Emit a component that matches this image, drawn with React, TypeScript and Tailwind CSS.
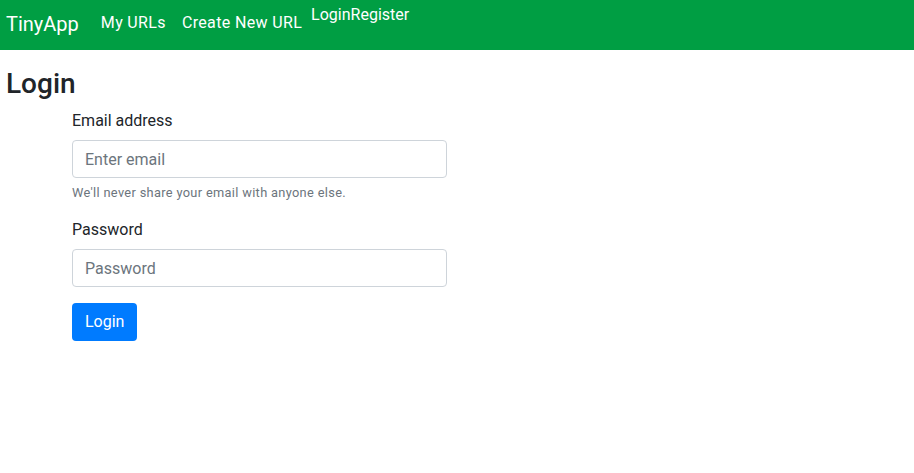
import React from "react";

export default function App() {
  return (
    <div className="min-h-[473px] bg-white text-[#212529]" style={{ fontFamily: "Roboto, 'Liberation Sans', sans-serif" }}>
      <nav className="flex h-[50px] items-start bg-[#009e43] px-[6px]">
        <a className="mt-[9px] text-[20px] leading-[30px] text-white">TinyApp</a>
        <div className="ml-[22px] mt-[11px] flex text-[16px] leading-[24px] tracking-[0.35px] text-white">
          <a className="mr-[16px]">My URLs</a>
          <a className="mr-[9px]">Create New URL</a>
        </div>
        <div className="mt-[3px] flex text-[16px] leading-[24px] text-white">
          <a>Login</a>
          <a>Register</a>
        </div>
      </nav>
      <div className="px-[6px]">
        <h3 className="mb-[8px] mt-[17px] text-[28px] font-medium leading-[34px]">Login</h3>
        <form className="ml-[66px] w-[375px]">
          <div className="mb-[16px]">
            <label className="mb-[7px] block text-[16px] leading-[24px]">Email address</label>
            <input
              type="email"
              placeholder="Enter email"
              className="block h-[38px] w-full rounded-[4px] border border-[#ced4da] px-[12px] text-[16px] text-[#495057] placeholder:text-[#6c757d]"
            />
            <small className="mt-[5px] block text-[12.8px] leading-[19px] tracking-[0.33px] text-[#6c757d]">
              We'll never share your email with anyone else.
            </small>
          </div>
          <div className="mb-[16px]">
            <label className="mb-[7px] block text-[16px] leading-[24px]">Password</label>
            <input
              type="password"
              placeholder="Password"
              className="block h-[38px] w-full rounded-[4px] border border-[#ced4da] px-[12px] text-[16px] text-[#495057] placeholder:text-[#6c757d]"
            />
          </div>
          <button
            type="button"
            className="h-[38px] rounded-[4px] bg-[#007bff] px-[13px] text-[16px] leading-[24px] text-white"
          >
            Login
          </button>
        </form>
      </div>
    </div>
  );
}
